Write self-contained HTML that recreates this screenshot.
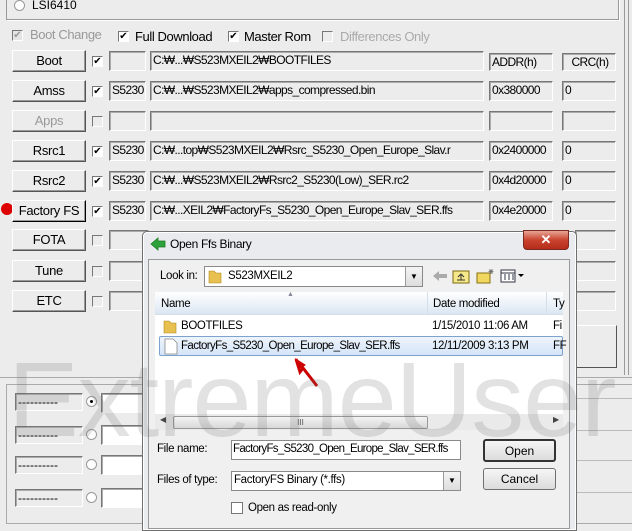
<!DOCTYPE html>
<html><head><meta charset="utf-8"><style>
*{box-sizing:border-box;margin:0;padding:0}
body{width:632px;height:524px;overflow:hidden;background:#ececec;position:relative;font-family:"Liberation Sans",sans-serif;font-size:12px;color:#000}
.a{position:absolute}
.btn{position:absolute;background:#ececec;border:1px solid;border-color:#fff #555 #555 #fff;box-shadow:inset -1px -1px 0 #999;text-align:center;font-size:13px;line-height:20px;letter-spacing:-0.3px}
.fld{position:absolute;border:1px solid;border-color:#777 #fff #fff #777;box-shadow:inset 1px 1px 0 #aaa;background:#ececec;font-size:12px;line-height:17px;padding-left:2px;white-space:nowrap;overflow:hidden;letter-spacing:-0.6px}
.cb{position:absolute;width:11px;height:11px;border:1px solid;border-color:#777 #fff #fff #777;background:#fff;font-size:10px;line-height:9px;text-align:center}
.wf{background:#fff}
.rad{position:absolute;width:11px;height:11px;border-radius:50%;border:1px solid #999;background:#fff}
.d{font-family:"Liberation Sans",sans-serif;font-size:11.5px;letter-spacing:-0.35px;white-space:nowrap}
.wb{position:absolute;background:linear-gradient(#f6f6f6,#dcdcdc);border:1px solid #707070;border-radius:3px;text-align:center;line-height:20px;font-size:12px}
.t{letter-spacing:-0.4px}
</style></head><body>
<div class="a" style="left:6px;top:-5px;width:613px;height:25px;border:1px solid #999;box-shadow:1px 1px 0 #fff"></div>
<div class="rad" style="left:14px;top:0px"></div>
<div class="a" style="left:32px;top:-2px;font-size:12px">LSI6410</div>
<div class="a" style="left:624px;top:0;width:1px;height:375px;background:#999"></div>
<div class="a" style="left:628px;top:0;width:1px;height:375px;background:#999"></div>

<div class="cb" style="left:12px;top:30px;background:#e4e4e4;color:#999">✔</div>
<div class="a t" style="left:30px;top:27px;color:#999;font-size:13px">Boot Change</div>
<div class="cb" style="left:118px;top:31px">✔</div>
<div class="a t" style="left:135px;top:29px;font-size:13px">Full Download</div>
<div class="cb" style="left:228px;top:31px">✔</div>
<div class="a t" style="left:244px;top:29px;font-size:13px">Master Rom</div>
<div class="cb" style="left:322px;top:31px;background:#ececec"></div>
<div class="a t" style="left:340px;top:29px;color:#aaa;font-size:13px">Differences Only</div>

<div class="btn" style="left:12px;top:50px;width:74px;height:22px">Boot</div>
<div class="cb" style="left:92px;top:56px">✔</div>
<div class="fld" style="left:109px;top:51px;width:37px;height:20px"></div>
<div class="fld" style="left:150px;top:51px;width:334px;height:20px">C:₩...₩S523MXEIL2₩BOOTFILES</div>
<div class="fld" style="left:489px;top:53px;width:64px;height:18px">ADDR(h)</div>
<div class="fld" style="left:562px;top:53px;width:54px;height:18px;text-align:center">CRC(h)</div>

<div class="btn" style="left:12px;top:80px;width:74px;height:22px">Amss</div>
<div class="cb" style="left:92px;top:86px">✔</div>
<div class="fld" style="left:109px;top:81px;width:37px;height:20px">S5230</div>
<div class="fld" style="left:150px;top:81px;width:334px;height:20px">C:₩...₩S523MXEIL2₩apps_compressed.bin</div>
<div class="fld" style="left:489px;top:81px;width:64px;height:20px">0x380000</div>
<div class="fld" style="left:562px;top:81px;width:54px;height:20px">0</div>

<div class="btn" style="left:12px;top:110px;width:74px;height:22px;color:#999">Apps</div>
<div class="cb" style="left:92px;top:116px;background:#ececec"></div>
<div class="fld" style="left:109px;top:111px;width:37px;height:20px"></div>
<div class="fld" style="left:150px;top:111px;width:334px;height:20px"></div>
<div class="fld" style="left:489px;top:111px;width:64px;height:20px"></div>
<div class="fld" style="left:562px;top:111px;width:54px;height:20px"></div>

<div class="btn" style="left:12px;top:140px;width:74px;height:22px">Rsrc1</div>
<div class="cb" style="left:92px;top:146px">✔</div>
<div class="fld" style="left:109px;top:141px;width:37px;height:20px">S5230</div>
<div class="fld" style="left:150px;top:141px;width:334px;height:20px">C:₩...top₩S523MXEIL2₩Rsrc_S5230_Open_Europe_Slav.r</div>
<div class="fld" style="left:489px;top:141px;width:64px;height:20px">0x2400000</div>
<div class="fld" style="left:562px;top:141px;width:54px;height:20px">0</div>

<div class="btn" style="left:12px;top:170px;width:74px;height:22px">Rsrc2</div>
<div class="cb" style="left:92px;top:176px">✔</div>
<div class="fld" style="left:109px;top:171px;width:37px;height:20px">S5230</div>
<div class="fld" style="left:150px;top:171px;width:334px;height:20px">C:₩...₩S523MXEIL2₩Rsrc2_S5230(Low)_SER.rc2</div>
<div class="fld" style="left:489px;top:171px;width:64px;height:20px">0x4d20000</div>
<div class="fld" style="left:562px;top:171px;width:54px;height:20px">0</div>

<div class="a" style="left:1px;top:203px;width:12px;height:12px;border-radius:50%;background:#d00"></div>
<div class="btn" style="left:12px;top:200px;width:74px;height:22px;border-color:#fff #000 #000 #fff">Factory FS</div>
<div class="cb" style="left:92px;top:206px">✔</div>
<div class="fld" style="left:109px;top:201px;width:37px;height:20px">S5230</div>
<div class="fld" style="left:150px;top:201px;width:334px;height:20px">C:₩...XEIL2₩FactoryFs_S5230_Open_Europe_Slav_SER.ffs</div>
<div class="fld" style="left:489px;top:201px;width:64px;height:20px">0x4e20000</div>
<div class="fld" style="left:562px;top:201px;width:54px;height:20px">0</div>

<div class="btn" style="left:12px;top:229px;width:74px;height:22px">FOTA</div>
<div class="cb" style="left:92px;top:235px;background:#ececec"></div>
<div class="fld" style="left:109px;top:230px;width:40px;height:20px"></div>
<div class="btn" style="left:12px;top:260px;width:74px;height:22px">Tune</div>
<div class="cb" style="left:92px;top:266px;background:#ececec"></div>
<div class="fld" style="left:109px;top:261px;width:40px;height:20px"></div>
<div class="btn" style="left:12px;top:290px;width:74px;height:22px">ETC</div>
<div class="cb" style="left:92px;top:296px;background:#ececec"></div>
<div class="fld" style="left:109px;top:291px;width:40px;height:20px"></div>
<div class="fld" style="left:575px;top:230px;width:41px;height:20px"></div>
<div class="fld" style="left:575px;top:261px;width:41px;height:20px"></div>
<div class="fld" style="left:575px;top:291px;width:41px;height:20px"></div>
<div class="a" style="left:560px;top:325px;width:57px;height:43px;border:1px solid;border-color:#fff #555 #555 #fff"></div>

<div class="a" style="left:0;top:377px;width:632px;height:1px;background:#aaa"></div>
<div class="a" style="left:6px;top:384px;width:640px;height:140px;border:1px solid #aaa"></div>
<div class="fld" style="left:15px;top:393px;width:68px;height:18px;letter-spacing:0">----------</div>
<div class="rad" style="left:86px;top:396px"><div class="a" style="left:3px;top:3px;width:3px;height:3px;background:#000;border-radius:50%"></div></div>
<div class="fld wf" style="left:101px;top:393px;width:60px;height:20px"></div>
<div class="fld" style="left:15px;top:426px;width:68px;height:18px;letter-spacing:0">----------</div>
<div class="rad" style="left:86px;top:429px"></div>
<div class="fld wf" style="left:101px;top:425px;width:60px;height:20px"></div>
<div class="fld" style="left:15px;top:456px;width:68px;height:18px;letter-spacing:0">----------</div>
<div class="rad" style="left:86px;top:459px"></div>
<div class="fld wf" style="left:101px;top:455px;width:60px;height:20px"></div>
<div class="fld" style="left:15px;top:489px;width:68px;height:18px;letter-spacing:0">----------</div>
<div class="rad" style="left:86px;top:492px"></div>
<div class="fld wf" style="left:101px;top:488px;width:60px;height:20px"></div>
<div class="a" style="left:577px;top:398px;width:55px;height:1px;background:#bbb"></div>
<div class="a" style="left:577px;top:430px;width:55px;height:1px;background:#bbb"></div>
<div class="a" style="left:577px;top:460px;width:55px;height:1px;background:#bbb"></div>
<div class="a" style="left:577px;top:492px;width:55px;height:1px;background:#bbb"></div>

<div class="a" style="left:142px;top:231px;width:435px;height:300px;background:#e9ebee;border:1px solid #707070;border-radius:5px 5px 0 0;box-shadow:inset 0 0 0 1px #fff"></div>
<svg class="a" style="left:150px;top:237px" width="16" height="14"><path d="M1 7 L8 1 L8 4 L15 4 L15 10 L8 10 L8 13 Z" fill="#2ea23a" stroke="#1a7a22" stroke-width=".8"/></svg>
<div class="a d" style="left:170px;top:237px;font-size:12px">Open Ffs Binary</div>
<div class="a" style="left:523px;top:230px;width:46px;height:20px;border-radius:0 0 4px 4px;background:linear-gradient(#e8a595,#c9432f 50%,#b52d1a);border:1px solid #7a2a20;color:#fff;text-align:center;font-weight:bold;font-size:13px;line-height:18px">✕</div>
<div class="a" style="left:148px;top:259px;width:422px;height:270px;background:#f0f0f0;border:1px solid #999"></div>
<div class="a d" style="left:160px;top:270px">Look in:</div>
<div class="a" style="left:204px;top:266px;width:219px;height:21px;background:#fff;border:1px solid #8a8a8a"></div>
<svg class="a" style="left:208px;top:268px" width="14" height="16"><path d="M1 3 h5 l2 2 h5 v10 H1z" fill="#e8c050" stroke="#b08a20" stroke-width=".6"/></svg>
<div class="a d" style="left:228px;top:270px">S523MXEIL2</div>
<div class="a" style="left:405px;top:267px;width:17px;height:19px;background:linear-gradient(#f4f4f4,#ddd);border-left:1px solid #999;font-size:8px;text-align:center;line-height:19px">▼</div>
<svg class="a" style="left:432px;top:270px" width="16" height="12"><path d="M1 6 L7 1 V4 H15 V8 H7 V11 Z" fill="#aaa"/></svg>
<svg class="a" style="left:452px;top:268px" width="18" height="16"><rect x="1" y="3" width="16" height="12" fill="#f5e88a" stroke="#7a6a10"/><path d="M9 12 V7 M6 9 L9 6 L12 9 M5 12 h8" stroke="#333" fill="none"/></svg>
<svg class="a" style="left:476px;top:268px" width="18" height="16"><rect x="1" y="5" width="13" height="10" fill="#f0d860" stroke="#8a7010"/><path d="M15 1 L15 6 M12.5 3.5 h5 M13 1.5 l4 4 M17 1.5 l-4 4" stroke="#666" stroke-width=".7"/></svg>
<svg class="a" style="left:500px;top:268px" width="26" height="16"><rect x="1" y="2" width="14" height="12" fill="#fff" stroke="#334"/><path d="M1 5 h14 M4 7h2M8 7h2M12 7h2M4 9h2M8 9h2M12 9h2M4 11h2M8 11h2M12 11h2" stroke="#334"/><path d="M18 6 h6 l-3 3z" fill="#000"/></svg>

<div class="a" style="left:155px;top:292px;width:408px;height:137px;background:#fff"></div>
<div class="a" style="left:155px;top:292px;width:408px;height:23px;background:linear-gradient(#fff,#e9f0f8 60%,#dbe6f2);border-bottom:1px solid #d5dfea"></div>
<div class="a" style="left:427px;top:292px;width:1px;height:23px;background:#d5dfea"></div>
<div class="a" style="left:546px;top:292px;width:1px;height:23px;background:#d5dfea"></div>
<div class="a" style="left:287px;top:291px;font-size:7px;color:#889">▲</div>
<div class="a d" style="left:161px;top:298px">Name</div>
<div class="a d" style="left:433px;top:298px">Date modified</div>
<div class="a d" style="left:553px;top:298px">Ty</div>
<svg class="a" style="left:163px;top:318px" width="14" height="16"><path d="M1 3 h5 l2 2 h5 v10 H1z" fill="#e8c050" stroke="#b08a20" stroke-width=".6"/></svg>
<div class="a d" style="left:181px;top:320px">BOOTFILES</div>
<div class="a d" style="left:432px;top:320px">1/15/2010 11:06 AM</div>
<div class="a d" style="left:553px;top:320px">Fi</div>
<div class="a" style="left:159px;top:336px;width:404px;height:20px;background:linear-gradient(#eef4fc,#d4e4f7);border:1px solid #7da2ce;border-radius:2px"></div>
<svg class="a" style="left:164px;top:338px" width="14" height="17"><path d="M1 1 h8 l4 4 v11 H1z" fill="#fff" stroke="#888" stroke-width=".8"/></svg>
<div class="a d" style="left:181px;top:340px;letter-spacing:-0.6px">FactoryFs_S5230_Open_Europe_Slav_SER.ffs</div>
<div class="a d" style="left:432px;top:340px">12/11/2009 3:13 PM</div>
<div class="a d" style="left:553px;top:340px">FF</div>
<svg class="a" style="left:292px;top:356px" width="30" height="34"><path d="M4 3 L8 16 L11 12 L25 30" stroke="#c00" stroke-width="3" fill="none"/><path d="M3 2 L14 9 L6 14z" fill="#c00"/></svg>
<div class="a" style="left:155px;top:414px;width:408px;height:16px;background:#eaeaea"></div>
<div class="a" style="left:160px;top:415px;font-size:8px;color:#444">◀</div>
<div class="a" style="left:553px;top:415px;font-size:8px;color:#444">▶</div>
<div class="a" style="left:173px;top:416px;width:255px;height:13px;background:linear-gradient(#f3f3f3,#d8d8d8);border:1px solid #999;border-radius:2px;font-size:8px;text-align:center;line-height:11px;color:#555">III</div>

<div class="a d" style="left:157px;top:443px">File name:</div>
<div class="a d" style="left:231px;top:440px;width:230px;height:20px;background:#fff;border:1px solid #8a8a8a;padding:2px 1px;overflow:hidden;letter-spacing:-0.7px">FactoryFs_S5230_Open_Europe_Slav_SER.ffs</div>
<div class="wb" style="left:483px;top:439px;width:73px;height:23px;border:2px solid #333">Open</div>
<div class="a d" style="left:157px;top:474px">Files of type:</div>
<div class="a d" style="left:231px;top:471px;width:230px;height:20px;background:#fff;border:1px solid #8a8a8a;padding:2px 2px">FactoryFS Binary (*.ffs)</div>
<div class="a" style="left:443px;top:472px;width:17px;height:18px;background:linear-gradient(#f4f4f4,#ddd);border-left:1px solid #999;font-size:8px;text-align:center;line-height:18px">▼</div>
<div class="wb" style="left:483px;top:468px;width:73px;height:22px">Cancel</div>
<div class="a" style="left:231px;top:502px;width:12px;height:12px;background:#fff;border:1px solid #777"></div>
<div class="a d" style="left:248px;top:502px">Open as read-only</div>

<div class="a" style="left:8px;top:340px;font-size:106px;line-height:120px;color:rgba(110,110,110,0.2);font-family:'Liberation Sans',sans-serif;white-space:nowrap;letter-spacing:-1px">ExtremeUser</div>
</body></html>
